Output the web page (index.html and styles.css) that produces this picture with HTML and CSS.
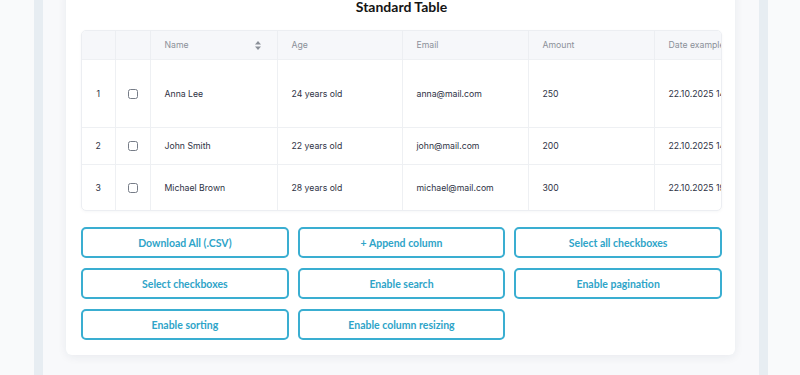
FILE: index.html
```html
<!DOCTYPE html>
<html>
<head>
  <title>Standard Table</title>
  <link rel="stylesheet" href="styles.css">
</head>
<body>
  <div class="page">
    <div class="card">
      <h1 class="title">Standard Table</h1>
      <div class="table-wrap">
        <table class="data-table">
          <colgroup>
            <col class="c-num">
            <col class="c-check">
            <col class="c-name">
            <col class="c-mid">
            <col class="c-wide">
            <col class="c-wide">
            <col class="c-wide">
          </colgroup>
          <thead>
            <tr>
              <th></th>
              <th></th>
              <th>
                <div class="th-sort">
                  <span>Name</span>
                  <svg class="sort-icon" width="6" height="9" viewBox="0 0 6 9">
                    <path d="M3 0 L6 3.5 L0 3.5 Z" fill="#8a8f98"/>
                    <path d="M3 9 L6 5.5 L0 5.5 Z" fill="#8a8f98"/>
                  </svg>
                </div>
              </th>
              <th>Age</th>
              <th>Email</th>
              <th>Amount</th>
              <th>Date example</th>
            </tr>
          </thead>
          <tbody>
            <tr class="row-1">
              <td class="num">1</td>
              <td class="check"><span class="box"></span></td>
              <td>Anna Lee</td>
              <td>24 years old</td>
              <td>anna@mail.com</td>
              <td>250</td>
              <td>22.10.2025 14:30</td>
            </tr>
            <tr class="row-2">
              <td class="num">2</td>
              <td class="check"><span class="box"></span></td>
              <td>John Smith</td>
              <td>22 years old</td>
              <td>john@mail.com</td>
              <td>200</td>
              <td>22.10.2025 14:30</td>
            </tr>
            <tr class="row-3">
              <td class="num">3</td>
              <td class="check"><span class="box"></span></td>
              <td>Michael Brown</td>
              <td>28 years old</td>
              <td>michael@mail.com</td>
              <td>300</td>
              <td>22.10.2025 19:30</td>
            </tr>
          </tbody>
        </table>
      </div>
      <div class="actions">
        <button class="action-btn">Download All (.CSV)</button>
        <button class="action-btn">+ Append column</button>
        <button class="action-btn">Select all checkboxes</button>
        <button class="action-btn">Select checkboxes</button>
        <button class="action-btn">Enable search</button>
        <button class="action-btn">Enable pagination</button>
        <button class="action-btn">Enable sorting</button>
        <button class="action-btn">Enable column resizing</button>
      </div>
    </div>
  </div>
</body>
</html>
```

FILE: styles.css
```css
body {
  margin: 0;
  padding: 0;
  background-color: #f9fafb;
  font-family: Inter, "Noto Sans", sans-serif;
  overflow: hidden;
}

.page {
  display: flow-root;
  margin-left: 34px;
  width: 716px;
  height: 375px;
  border-left: 9px solid #e7edf2;
  border-right: 9px solid #e7edf2;
  background-color: #f8f9fb;
}

.card {
  width: 669px;
  margin: -10px 0 0 23px;
  padding: 0 13px 15px 15px;
  box-sizing: border-box;
  background-color: #fff;
  border-radius: 0 0 6px 6px;
  box-shadow: 0 2px 10px rgba(30, 40, 70, 0.07);
}

.title {
  margin: 0;
  font-family: Lato, "Open Sans", sans-serif;
  font-size: 14px;
  font-weight: 700;
  line-height: 34px;
  text-align: center;
  color: #141414;
}

.table-wrap {
  margin-top: 6px;
  width: 641px;
  box-sizing: border-box;
  overflow: hidden;
  border: 1px solid #eceef2;
  border-radius: 5px;
  box-shadow: 0 1px 3px rgba(30, 40, 70, 0.04);
}

.data-table {
  width: 696px;
  table-layout: fixed;
  border-collapse: collapse;
  font-size: 8.7px;
}

.c-num { width: 33px; }
.c-check { width: 35px; }
.c-name { width: 127px; }
.c-mid { width: 125px; }
.c-wide { width: 126px; }

.data-table th {
  height: 28px;
  padding: 0 14px;
  background-color: #f6f7fa;
  color: #8b9099;
  font-weight: 400;
  text-align: left;
  white-space: nowrap;
  border-left: 1px solid #eceef2;
}

.data-table td {
  padding: 0 14px;
  color: #2e3244;
  white-space: nowrap;
  border-left: 1px solid #eef0f3;
  border-top: 1px solid #eef0f3;
}

.data-table th:first-child,
.data-table td:first-child {
  border-left: none;
}

.th-sort {
  display: flex;
  justify-content: space-between;
  align-items: center;
}

.sort-icon {
  margin-right: 2px;
}

.row-1 td { height: 67px; }
.row-2 td { height: 36px; }
.row-3 td { height: 45px; }

.data-table td.num {
  padding: 0;
  text-align: center;
}

.data-table td.check {
  padding: 0;
  text-align: center;
}

.box {
  display: inline-block;
  width: 8px;
  height: 8px;
  border: 1px solid #767c87;
  border-radius: 2.5px;
  vertical-align: middle;
}

.actions {
  display: grid;
  grid-template-columns: repeat(3, 1fr);
  column-gap: 9px;
  row-gap: 10px;
  margin-top: 16px;
  width: 641px;
}

.action-btn {
  height: 31px;
  background-color: #fff;
  border: 2px solid #3aaed1;
  border-radius: 5px;
  color: #2ea4c8;
  font-family: Lato, "Open Sans", sans-serif;
  font-size: 10.5px;
  font-weight: 700;
  cursor: pointer;
}

.action-btn:hover {
  background-color: #f0f9fc;
}
```
